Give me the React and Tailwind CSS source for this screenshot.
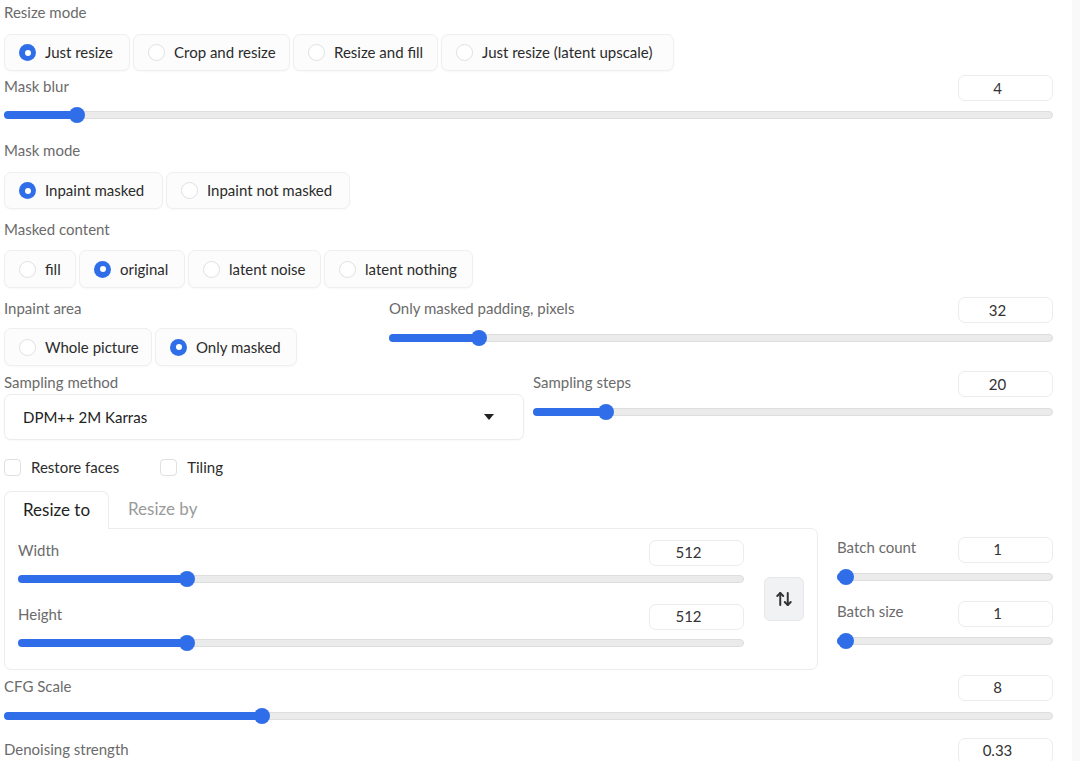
import React from "react";
import { ArrowUpDown } from "lucide-react";

const FONT = { fontFamily: "Lato, 'Noto Sans', sans-serif" };

function Label({ children, className = "" }) {
  return (
    <div className={"text-[15px] leading-[24px] text-[#6b6b6b] " + className}>{children}</div>
  );
}

function NumBox({ value }) {
  return (
    <div className="w-[95px] h-[26px] rounded-[7px] border border-[#ececec] bg-white flex items-center justify-center pr-[16px] text-[15px] text-[#333]">
      {value}
    </div>
  );
}

function Slider({ center, className = "" }) {
  return (
    <div className={"relative h-[16px] flex items-center " + className}>
      <div className="relative w-full h-[8px] rounded-full bg-[#ebebeb] border border-[#dedede]">
        <div
          className="absolute left-[-1px] top-[-1px] h-[8px] rounded-full bg-[#2f6ee8]"
          style={{ width: center + 1 }}
        />
      </div>
      <div
        className="absolute top-0 w-[16px] h-[16px] rounded-full bg-[#2f6ee8]"
        style={{ left: center - 8 }}
      />
    </div>
  );
}

function SliderBlock({ label, value, center, gap = "mt-[5px]", lo = "-mt-[4px]" }) {
  return (
    <div className="flex flex-col">
      <div className="flex items-center justify-between h-[26px]">
        <Label className={lo}>{label}</Label>
        <NumBox value={value} />
      </div>
      <Slider center={center} className={gap} />
    </div>
  );
}

function Radio({ checked }) {
  return checked ? (
    <span className="w-[17px] h-[17px] rounded-full bg-[#2f6ee8] flex items-center justify-center shrink-0">
      <span className="w-[6px] h-[6px] rounded-full bg-white" />
    </span>
  ) : (
    <span className="w-[17px] h-[17px] rounded-full bg-white border border-[#e0e0e0] shrink-0" />
  );
}

function RadioGroup({ items, h = "h-[37px]" }) {
  return (
    <div className="flex gap-[3px]">
      {items.map(([text, checked, w]) => (
        <div
          key={text}
          className={
            "flex items-center gap-[9px] pl-[14px] rounded-[7px] border border-[#efefef] bg-[#fcfcfc] shadow-[0_1px_2px_rgba(0,0,0,0.03)] text-[15px] text-[#2b2b2b] " +
            h
          }
          style={{ width: w }}
        >
          <Radio checked={checked} />
          <span>{text}</span>
        </div>
      ))}
    </div>
  );
}

function Checkbox({ text }) {
  return (
    <div className="flex items-center gap-[10px]">
      <span className="w-[17px] h-[17px] rounded-[4px] border border-[#e0e0e0] bg-white" />
      <span className="text-[15px] text-[#2b2b2b]">{text}</span>
    </div>
  );
}

export default function App() {
  return (
    <div className="w-[1080px] h-[761px] overflow-hidden bg-white flex" style={FONT}>
      <div className="w-[1049px] ml-[4px] flex flex-col">
        <Label>Resize mode</Label>
        <div className="mt-[10px]">
          <RadioGroup
            items={[
              ["Just resize", true, 126],
              ["Crop and resize", false, 157],
              ["Resize and fill", false, 145],
              ["Just resize (latent upscale)", false, 233],
            ]}
          />
        </div>

        <div className="mt-[4px]">
          <SliderBlock label="Mask blur" value="4" center={73} gap="mt-[6px]" />
        </div>

        <Label className="mt-[15px]">Mask mode</Label>
        <div className="mt-[10px]">
          <RadioGroup
            items={[
              ["Inpaint masked", true, 159],
              ["Inpaint not masked", false, 184],
            ]}
          />
        </div>

        <Label className="mt-[8px]">Masked content</Label>
        <div className="mt-[9px]">
          <RadioGroup
            h="h-[38px]"
            items={[
              ["fill", false, 72],
              ["original", true, 106],
              ["latent noise", false, 133],
              ["latent nothing", false, 149],
            ]}
          />
        </div>

        <div className="mt-[8px] flex">
          <div className="w-[385px] flex flex-col">
            <Label>Inpaint area</Label>
            <div className="mt-[8px]">
              <RadioGroup
                h="h-[38px]"
                items={[
                  ["Whole picture", false, 148],
                  ["Only masked", true, 142],
                ]}
              />
            </div>
          </div>
          <div className="flex-1 mt-[1px]">
            <SliderBlock label="Only masked padding, pixels" value="32" center={90} gap="mt-[7px]" />
          </div>
        </div>

        <div className="mt-[4px] flex gap-[9px]">
          <div className="w-[520px] flex flex-col">
            <Label>Sampling method</Label>
            <div className="h-[46px] rounded-[7px] border border-[#ececec] bg-white shadow-[0_1px_2px_rgba(0,0,0,0.03)] flex items-center justify-between pl-[18px] pr-[29px] text-[15px] text-[#222]">
              <span>DPM++ 2M Karras</span>
              <svg width="10" height="6" viewBox="0 0 10 6">
                <path d="M0 0 L10 0 L5 6 Z" fill="#222" />
              </svg>
            </div>
          </div>
          <div className="flex-1 mt-[1px]">
            <SliderBlock label="Sampling steps" value="20" center={73} gap="mt-[7px]" />
          </div>
        </div>

        <div className="mt-[16px] flex gap-[41px]">
          <Checkbox text="Restore faces" />
          <Checkbox text="Tiling" />
        </div>

        <div className="mt-[12px] flex">
          <div className="w-[814px] flex flex-col">
            <div className="flex h-[37px]">
              <div className="w-[105px] h-[38px] flex items-center justify-center rounded-t-[7px] border border-b-0 border-[#ececec] bg-white text-[17px] text-[#222] relative z-10">
                Resize to
              </div>
              <div className="pl-[19px] flex items-center text-[17px] text-[#9a9a9a]">Resize by</div>
            </div>
            <div className="h-[142px] rounded-b-[7px] rounded-tr-[7px] border border-[#ececec] flex pl-[13px] pt-[11px]">
              <div className="w-[726px] flex flex-col">
                <SliderBlock label="Width" value="512" center={169} gap="mt-[5px]" lo="-mt-[6px]" />
                <div className="mt-[17px]">
                  <SliderBlock label="Height" value="512" center={169} gap="mt-[5px]" lo="-mt-[6px]" />
                </div>
              </div>
              <div className="ml-[20px] mt-[37px] w-[40px] h-[44px] rounded-[6px] bg-[#f1f2f4] border border-[#e6e7ea] flex items-center justify-center text-[#333]">
                <ArrowUpDown size={18} strokeWidth={2.6} />
              </div>
            </div>
          </div>
          <div className="ml-[19px] flex-1 flex flex-col pt-[46px]">
            <SliderBlock label="Batch count" value="1" center={9} gap="mt-[6px]" lo="-mt-[5px]" />
            <div className="mt-[16px]">
              <SliderBlock label="Batch size" value="1" center={9} gap="mt-[6px]" lo="-mt-[5px]" />
            </div>
          </div>
        </div>

        <div className="mt-[5px]">
          <SliderBlock label="CFG Scale" value="8" center={258} gap="mt-[7px]" />
        </div>
        <div className="mt-[14px]">
          <SliderBlock label="Denoising strength" value="0.33" center={100} />
        </div>
      </div>
      <div className="ml-auto w-[8px] h-full bg-[#f9f9f9]" />
    </div>
  );
}
